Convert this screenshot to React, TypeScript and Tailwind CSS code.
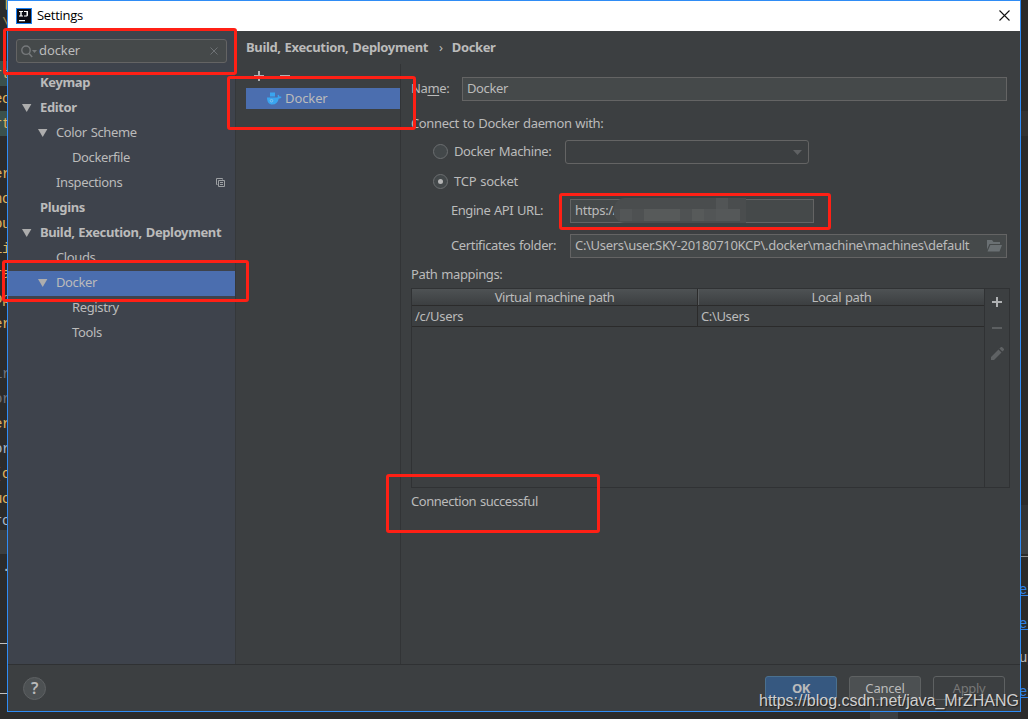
import type { ReactNode } from 'react'

type TreeItem = {
    label: string
    pad: string
    bold?: boolean
    arrow?: boolean
    selected?: boolean
    copy?: boolean
}

const tree: TreeItem[] = [
    { label: 'Keymap', pad: 'pl-8', bold: true },
    { label: 'Editor', pad: 'pl-[14px]', bold: true, arrow: true },
    { label: 'Color Scheme', pad: 'pl-[30px]', arrow: true },
    { label: 'Dockerfile', pad: 'pl-16' },
    { label: 'Inspections', pad: 'pl-12', copy: true },
    { label: 'Plugins', pad: 'pl-8', bold: true },
    { label: 'Build, Execution, Deployment', pad: 'pl-[14px]', bold: true, arrow: true },
    { label: 'Clouds', pad: 'pl-12' },
    { label: 'Docker', pad: 'pl-[30px]', arrow: true, selected: true },
    { label: 'Registry', pad: 'pl-16' },
    { label: 'Tools', pad: 'pl-16' },
]

// Editor lines that stay visible on both sides of the dialog
const leftLines = [
    { h: 'h-[11px]', text: 'l', style: 'text-[#d9b45f]' },
    { h: 'h-[25px]', text: '\\', style: 'text-[#a58b50]' },
    { h: 'h-[25px]', text: '', style: '' },
    { h: 'h-[25px]', text: 'rt', style: 'text-[#e0b55e] bg-[#3b514d]' },
    { h: 'h-[25px]', text: 'ec', style: 'text-[#e0b55e]' },
    { h: 'h-[25px]', text: 'rt', style: 'text-[#e0b55e] bg-[#3b514d]' },
    { h: 'h-[25px]', text: '', style: '' },
    { h: 'h-[25px]', text: 'er', style: 'text-[#e0b55e]' },
    { h: 'h-[25px]', text: 'nc', style: 'text-[#e0b55e]' },
    { h: 'h-[25px]', text: 'ou', style: 'text-[#e0b55e]' },
    { h: 'h-[25px]', text: 'li', style: 'text-[#e0b55e]' },
    { h: 'h-[25px]', text: 'ra', style: 'text-[#e0b55e]' },
    { h: 'h-[25px]', text: 'op', style: 'text-[#e0b55e]' },
    { h: 'h-[25px]', text: 'er', style: 'text-[#e0b55e]' },
    { h: 'h-[25px]', text: '', style: '' },
    { h: 'h-[25px]', text: 'ir', style: 'text-[#72737a]' },
    { h: 'h-[25px]', text: 'or', style: 'text-[#72737a]' },
    { h: 'h-[25px]', text: 'er', style: 'text-[#e0b55e]' },
    { h: 'h-[25px]', text: 'or', style: 'text-[#a9b7c6]' },
    { h: 'h-[25px]', text: '(c', style: 'text-[#e0b55e]' },
    { h: 'h-[25px]', text: 'uc', style: 'text-[#e0b55e]' },
    { h: 'h-[19px]', text: 'rc', style: 'text-[#a9b7c6]' },
    { h: 'h-6', text: '', style: 'bg-[#3c3f41]' },
    { h: 'h-[25px]', text: '.', style: 'text-[#bbbbbb]' },
    { h: 'h-[52px]', text: '', style: '' },
    { h: 'h-[13px]', text: '', style: 'border-b border-[#c0c0c0]' },
    { h: 'h-[50px]', text: '', style: 'border-b border-[#c0c0c0]' },
]

const rightLines = [
    { h: 'h-[111px]', text: '', style: '' },
    { h: 'h-[25px]', text: '', style: 'bg-[#323232]' },
    { h: 'h-[369px]', text: '', style: '' },
    { h: 'h-[25px]', text: '', style: 'bg-[#313335]' },
    { h: 'h-6', text: '', style: 'bg-[#3c4043]' },
    { h: 'h-[3px]', text: '', style: 'border-b border-[#909090]' },
    { h: 'h-[21px]', text: '', style: '' },
    { h: 'h-[25px]', text: 'et', style: 'text-[#2f7fe0] underline' },
    { h: 'h-[9px]', text: '', style: '' },
    { h: 'h-[25px]', text: 'et', style: 'text-[#2f7fe0] underline' },
    { h: 'h-[9px]', text: '', style: '' },
    { h: 'h-[25px]', text: 'up', style: 'text-[#bbbbbb]' },
    { h: 'h-[9px]', text: '', style: '' },
    { h: 'h-[25px]', text: 'et', style: 'text-[#2f7fe0] underline' },
]

function Arrow() {
    return (
        <svg width="10" height="8" viewBox="0 0 10 8" className="mt-[2px] mr-2 shrink-0">
            <path d="M0 0H9.4L4.7 8Z" fill="#adadad" />
        </svg>
    )
}

function Plus({ className = '' }: { className?: string }) {
    return (
        <svg width="10" height="10" viewBox="0 0 10 10" className={className}>
            <path d="M4 0h2v4h4v2H6v4H4V6H0V4h4z" fill="currentColor" />
        </svg>
    )
}

function SearchField() {
    return (
        <div className="mx-2 mt-2 flex h-6 w-[211px] items-center rounded-[3px] border border-[#646464] bg-[#45494a] pl-1">
            <svg width="16" height="13" viewBox="0 0 16 13" fill="none">
                <circle cx="5" cy="5.2" r="4.2" stroke="#76797b" strokeWidth="1.4" />
                <path d="M8 8.4l3.2 3.6" stroke="#76797b" strokeWidth="1.5" />
                <path d="M11 5h5l-2.5 3z" fill="#76797b" />
            </svg>
            <span className="ml-[2px] flex-1 pb-[2px] tracking-[-0.1px]">docker</span>
            <svg width="8" height="8" viewBox="0 0 8 8" className="mr-2">
                <path d="M.5 .5l7 7M7.5 .5l-7 7" stroke="#6e7275" />
            </svg>
        </div>
    )
}

function TreeRow({ item }: { item: TreeItem }) {
    return (
        <div className={`flex h-[25px] items-center pb-1 ${item.pad} ${item.selected ? 'bg-[#4b6eaf]' : ''}`}>
            {item.arrow && <Arrow />}
            <span className={item.bold ? 'font-bold' : ''}>{item.label}</span>
            {item.copy && (
                <svg width="9" height="9" viewBox="0 0 9 9" fill="none" stroke="#9da0a3" className="mt-[2px] mr-[10px] ml-auto">
                    <path d="M1.5 6.5h-1v-6h6v1" />
                    <path d="M2.5 2.5h6v6h-6zM4 4.5h3M4 6.5h3" />
                </svg>
            )}
        </div>
    )
}

function DockerIcon() {
    return (
        <svg width="15" height="13" viewBox="0 0 15 13">
            <path d="M3 0.5h5v4H3z" fill="#3aa5f0" />
            <path d="M0 5.5h10.5c.5-1 .4-1.6 0-2.3l1-.4c.5.5.8 1 .9 1.8.8-.1 1.500 0 2.100.4-.4 1-1.400 1.500-2.700 1.500C10.800 10.500 8.800 12.500 5.300 12.500 2 12.500 0 10 0 5.500z" fill="#3aa5f0" />
            <circle cx="4.5" cy="8.7" r="1.3" fill="none" stroke="#8fc8ee" strokeWidth=".8" />
        </svg>
    )
}

function Radio({ checked }: { checked?: boolean }) {
    return (
        <span className="mb-px flex size-[15px] shrink-0 items-center justify-center rounded-full border border-[#6b6e70] bg-[#43484a]">
            {checked && <span className="size-[5px] rounded-full bg-[#b5b5b5]" />}
        </span>
    )
}

function Input({ className, children }: { className: string; children?: ReactNode }) {
    return (
        <div className={`flex h-6 items-center border border-[#646464] bg-[#45494a] pb-[2px] pl-1 ${className}`}>
            {children}
        </div>
    )
}

function PathTable() {
    return (
        <div className="mt-[4px] ml-[10px] flex h-[200px] w-[599px] border border-[#303234]">
            <div className="flex w-[573px] flex-col border-r border-[#303234]">
                <div className="flex h-[17px] items-center border-b border-[#2b2b2b] bg-linear-to-b from-[#4e5254] to-[#3c3f41] text-center">
                    <span className="h-4 w-[286px] border-r border-[#2b2b2b] leading-4 tracking-[-0.45px]">Virtual machine path</span>
                    <span className="h-4 flex-1 border-l border-[#5b5e60] leading-4">Local path</span>
                </div>
                <div className="flex h-[21px] items-center border-b border-[#2b2b2b]">
                    <span className="h-5 w-[286px] border-r border-[#2b2b2b] pl-[3px] leading-5 tracking-[-0.3px]">/c/Users</span>
                    <span className="pl-[3px]">C:\Users</span>
                </div>
            </div>
            <div className="flex flex-1 flex-col items-center pt-2 text-[#afb1b3]">
                <Plus />
                <span className="mt-[20px] h-[2px] w-[10px] bg-[#5c5f61]" />
                <svg width="13" height="13" viewBox="0 0 13 13" className="mt-[18px]" fill="#5f6264">
                    <path d="M0 13v-3L7.5 2.5l3 3L3 13zM8.4 1.6L10 0h1l2 2v1l-1.600 1.600z" />
                </svg>
            </div>
        </div>
    )
}

function DockerForm() {
    return (
        <div className="flex-1 border-l border-[#323436]">
            <div className="mt-[13px] flex items-center pl-[10px]">
                <span className="w-[51px] pb-[2px]">Na<u className="underline-offset-2">m</u>e:</span>
                <Input className="w-[545px]">Docker</Input>
            </div>
            <div className="mt-[11px] mb-[6px] pl-[10px] leading-[22px]">Connect to Docker daemon with:</div>
            <div className="flex h-6 items-center pl-8">
                <Radio />
                <span className="ml-[6px] w-[111px] pb-[2px]">Docker Machine:</span>
                <div className="flex h-6 w-[244px] items-center justify-end rounded-[3px] border border-[#646464] pr-[6px]">
                    <svg width="9" height="5" viewBox="0 0 9 5">
                        <path d="M0 0h9L4.5 5z" fill="#5f6163" />
                    </svg>
                </div>
            </div>
            <div className="mt-[6px] flex h-6 items-center pl-8">
                <Radio checked />
                <span className="ml-[6px] pb-[2px] tracking-[-0.25px]">TCP socket</span>
            </div>
            <div className="mt-[5px] flex items-center pl-[50px]">
                <span className="w-[119px] pb-[2px] tracking-[-0.45px]">Engine API URL:</span>
                <Input className="relative w-[244px]">
                    <span className="tracking-[-0.3px]">https://</span>
                    {/* Smudged host name */}
                    <div className="absolute -top-[2px] left-[43px] flex h-[25px] w-[132px] flex-col overflow-hidden rounded-l-[11px] bg-[#4a4d4e] pr-[6px]">
                        <div className="mr-3 ml-auto h-[11px] w-3 bg-[#525556]" />
                        <div className="flex h-3">
                            <span className="w-[6px] bg-[#4d5051]" />
                            <span className="w-3 bg-[#535657]" />
                            <span className="w-3 bg-[#4e5152]" />
                            <span className="w-9 bg-[#575a5a]" />
                            <span className="w-3 bg-[#4f5253]" />
                            <span className="w-3 bg-[#575a5a]" />
                            <span className="w-3 bg-[#525556]" />
                            <span className="flex-1 bg-[#555859]" />
                        </div>
                    </div>
                </Input>
            </div>
            <div className="mt-[11px] flex items-center pl-[50px]">
                <span className="w-[119px] pb-[2px]">Certificates folder:</span>
                <Input className="w-[437px]">
                    <span className="flex-1 tracking-[-0.31px]">C:\Users\user.SKY-20180710KCP\.docker\machine\machines\default</span>
                    <svg width="15" height="12" viewBox="0 0 15 12" className="mt-[2px] mr-1" fill="#6a7073">
                        <path d="M0 0h5l1.5 2H13v2H2.5L0 9.5z" />
                        <path d="M3.3 5H15l-2.5 6.5H.5z" />
                    </svg>
                </Input>
            </div>
            <div className="mt-[6px] pl-[10px] leading-5">Path mappings:</div>
            <PathTable />
            <div className="mt-[3px] pl-[10px] leading-5 tracking-[-0.45px]">Connection successful</div>
        </div>
    )
}

function Button({ className, children }: { className: string; children: ReactNode }) {
    return (
        <div className={`flex h-6 w-[72px] items-center justify-center rounded-[3px] border ${className}`}>
            {children}
        </div>
    )
}

function SettingsDialog() {
    return (
        <div className="flex h-[712px] w-[1014px] flex-col border border-[#2f8cf5] bg-[#3c3f41]">
            <div className="flex h-[30px] shrink-0 items-center bg-white pb-px pl-2 font-['Open_Sans','Noto_Sans',sans-serif] text-black">
                <svg width="16" height="16" viewBox="0 0 16 16">
                    <path d="M0 0h16v16H0z" fill="#1b7ff0" />
                    <path d="M1 1h14v14H1z" fill="#0b0b14" />
                    <path d="M3 3h4v1H5.7v3.500H7v1H3v-1h1.300V4H3zM8 3h4v4.500l-1 1H8v-1h2.500V4H8zM3 12h6v1.200H3z" fill="#fff" />
                </svg>
                <span className="ml-[5px] flex-1 pb-px tracking-[-0.3px]">Settings</span>
                <svg width="11" height="11" viewBox="0 0 11 11" className="mr-[10px]">
                    <path d="M.5 .5l10 10M10.5 .5l-10 10" stroke="#111" strokeWidth="1.1" />
                </svg>
            </div>
            <div className="flex h-[633px]">
                <div className="w-[228px] border-r border-[#35383a] bg-[#3e434c]">
                    <SearchField />
                    <div className="mt-2">
                        {tree.map((item) => (
                            <TreeRow key={item.label} item={item} />
                        ))}
                    </div>
                </div>
                <div className="flex flex-1 flex-col">
                    <div className="flex h-[33px] items-center pb-[2px] pl-[10px] font-bold">
                        <span className="tracking-[-0.34px]">Build, Execution, Deployment</span>
                        <span className="mr-[9px] ml-[11px] font-normal">›</span>
                        <span>Docker</span>
                    </div>
                    <div className="flex flex-1">
                        <div className="w-[164px] pl-[10px]">
                            <div className="flex h-6 items-center gap-4 pl-2 text-[#afb1b3]">
                                <Plus />
                                <span className="h-[2px] w-[10px] bg-[#afb1b3]" />
                            </div>
                            <div className="flex h-[21px] items-center bg-[#4b6eaf] pl-[21px]">
                                <DockerIcon />
                                <span className="ml-[3px] pb-px tracking-[-0.1px]">Docker</span>
                            </div>
                        </div>
                        <DockerForm />
                    </div>
                </div>
            </div>
            <div className="flex flex-1 items-center border-t border-[#2f3133] px-[15px]">
                <div className="flex size-[23px] items-center justify-center rounded-full border border-[#5e6163] bg-[#4d5153] text-base font-semibold">
                    ?
                </div>
                <div className="ml-auto flex gap-3">
                    <Button className="border-[#4a708f] bg-[#365880] font-bold">OK</Button>
                    <Button className="border-[#5e6162] bg-[#4c5052] tracking-[-0.2px]">Cancel</Button>
                    <Button className="border-[#5e6162] text-[#777777]">Apply</Button>
                </div>
            </div>
        </div>
    )
}

export default function App() {
    return (
        <div className="relative flex h-[719px] w-[1028px] overflow-hidden bg-[#2b2b2b] font-['Noto_Sans','Open_Sans',sans-serif] text-[13px] leading-5 tracking-[-0.37px] whitespace-nowrap text-[#bbbbbb] [word-spacing:0.8px]">
            <div className="w-[7px] overflow-hidden font-['Liberation_Mono',monospace] text-sm">
                {leftLines.map((line, i) => (
                    <div key={i} className={`flex items-center justify-end overflow-hidden ${line.h} ${line.style}`}>
                        <span className="-mr-[3px]">{line.text}</span>
                    </div>
                ))}
            </div>
            <div className="flex flex-col">
                <SettingsDialog />
                <div className="ml-[863px] h-[7px] w-7 bg-[#3c3f41]" />
            </div>
            <div className="w-[7px] overflow-hidden font-['Liberation_Mono',monospace] text-sm">
                {rightLines.map((line, i) => (
                    <div key={i} className={`overflow-hidden leading-6 ${line.h} ${line.style}`}>
                        <span className="-ml-[2px]">{line.text}</span>
                    </div>
                ))}
            </div>

            {/* Highlight boxes */}
            <div className="absolute top-[28px] left-[3px] h-[47px] w-[234px] rounded-[3px] border-3 border-[#ff2015]" />
            <div className="absolute top-[76px] left-[227px] h-[54px] w-[189px] rounded-[3px] border-3 border-[#ff2015]" />
            <div className="absolute top-[260px] left-[2px] h-[42px] w-[247px] rounded-[3px] border-3 border-[#ff2015]" />
            <div className="absolute top-[193px] left-[559px] h-[37px] w-[272px] rounded-[3px] border-3 border-[#ff2015]" />
            <div className="absolute top-[474px] left-[386px] h-[59px] w-[214px] rounded-[3px] border-3 border-[#ff2015]" />

            {/* Watermark */}
            <div className="absolute top-[691px] left-[759px] font-['Liberation_Sans',sans-serif] text-base leading-5 tracking-[-0.02px] text-[#d0d0d0] text-shadow-[1px_1px_1px_#00000080]">
                https://blog.csdn.net/java_MrZHANG
            </div>
        </div>
    )
}
